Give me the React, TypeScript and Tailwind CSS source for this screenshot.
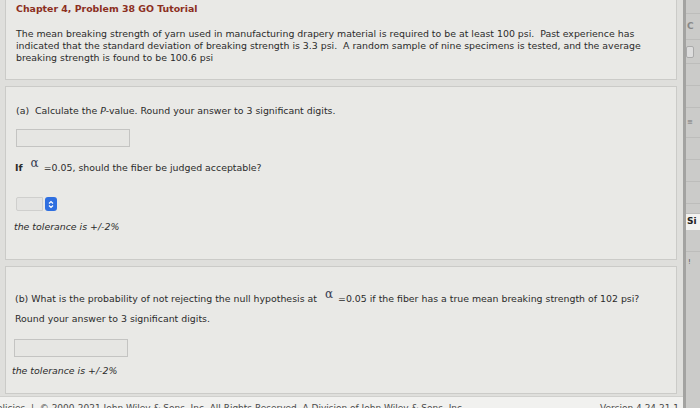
import React from 'react';

const body = "font-['DejaVu_Sans',Verdana,sans-serif] text-[9.4px] leading-[12px] text-[#2b2b2b] whitespace-nowrap";

function Alpha() {
  return (
    <span className="relative -top-[4px] ml-[8px] mr-[5px] font-['DejaVu_Serif',serif] text-[12px] text-[#3a3f55]">α</span>
  );
}

function TextInput({ className = '' }: { className?: string }) {
  return <div className={`h-[18px] w-[114px] border border-[#c4c4c2] bg-[#e6e6e3] ${className}`} />;
}

function Tolerance() {
  return <p className={`${body} italic`}>the tolerance is +/-2%</p>;
}

export default function App() {
  return (
    <div className="flex h-[408px] w-[700px] overflow-hidden bg-[#dfdfdc]">
      {/* main column */}
      <div className="flex w-[683px] flex-col">
        <div className="flex flex-col gap-[6px] pl-[5px] pr-[6px]">
          {/* intro */}
          <section className={`h-[80px] border-x border-b border-[#cbcbc8] bg-[#e9e9e6] px-[10px] pt-[3px] ${body}`}>
            <h1 className="font-bold text-[#8c2f1e]">Chapter 4, Problem 38 GO Tutorial</h1>
            <p className="mt-[13px]">
              The mean breaking strength of yarn used in manufacturing drapery material is required to be at least 100 psi.&nbsp; Past experience has
              <br />
              indicated that the standard deviation of breaking strength is 3.3 psi.&nbsp; A random sample of nine specimens is tested, and the average
              <br />
              breaking strength is found to be 100.6 psi
            </p>
          </section>

          {/* part a */}
          <section className="h-[174px] border border-[#cbcbc8] bg-[#e9e9e6] px-[10px] pt-[18px]">
            <p className={body}>
              (a)&nbsp; Calculate the <span className="italic">P</span>-value. Round your answer to 3 significant digits.
            </p>
            <TextInput className="mt-[12px]" />
            <p className={`${body} mt-[14px] -ml-[1px]`}>
              <span className="font-bold">If</span>
              <Alpha />=0.05, should the fiber be judged acceptable?
            </p>
            <div className="mt-[23px] flex items-center">
              <div className="h-[14px] w-[27px] rounded-l-[2px] border border-[#cfcfcd] bg-[#e4e4e2]" />
              <div className="ml-[2px] flex h-[14px] w-[12px] items-center justify-center rounded-[3px] bg-[#2f6fe0]">
                <svg width="6" height="9" viewBox="0 0 6 9" fill="none" stroke="white" strokeWidth="1.2">
                  <path d="M1 3.5 L3 1.5 L5 3.5" />
                  <path d="M1 5.5 L3 7.5 L5 5.5" />
                </svg>
              </div>
            </div>
            <div className="mt-[10px] -ml-[2px]">
              <Tolerance />
            </div>
          </section>

          {/* part b */}
          <section className="h-[128px] border border-[#cbcbc8] bg-[#e9e9e6] px-[9px] pt-[25px]">
            <p className={body}>
              (b) What is the probability of not rejecting the null hypothesis at
              <Alpha />=0.05 if the fiber has a true mean breaking strength of 102 psi?
            </p>
            <p className={`${body} mt-[8px]`}>Round your answer to 3 significant digits.</p>
            <TextInput className="mt-[14px] -ml-[1px]" />
            <div className="mt-[8px] -ml-[3px]">
              <Tolerance />
            </div>
          </section>
        </div>

        {/* footer */}
        <footer className="mt-[2px] flex flex-1 items-start justify-between border-t border-[#d0d0cd] bg-[#f1f1ef] pr-[4px] pt-[5px] font-['DejaVu_Sans',Verdana,sans-serif] text-[9px] leading-[12px] text-[#4a4a4a] whitespace-nowrap">
          <span className="-ml-[8px]">Policies&nbsp; |&nbsp; © 2000-2021 John Wiley &amp; Sons, Inc. All Rights Reserved. A Division of John Wiley &amp; Sons, Inc.</span>
          <span>Version 4.24.21.1</span>
        </footer>
      </div>

      {/* right edge strip */}
      <div className="flex w-[17px] border-l-[3px] border-[#a3a3a1] bg-[#cbcbc9]">
        <div className="flex w-full flex-col font-['DejaVu_Sans',sans-serif] text-[8px] text-[#555]">
          <div className="h-[14px] border-b border-[#bdbdbb]" />
          <div className="flex h-[26px] items-center border-b border-[#bdbdbb] pl-[1px] text-[9px] font-bold text-[#888]">C</div>
          <div className="flex h-[24px] items-center border-b border-[#bdbdbb]">
            <div className="h-[12px] w-[8px] rounded-[2px] border border-[#aaa] bg-[#ddd]" />
          </div>
          <div className="h-[22px] border-b border-[#bdbdbb]" />
          <div className="h-[22px] border-b border-[#bdbdbb]" />
          <div className="flex h-[30px] items-center border-b border-[#bdbdbb] pl-[1px] text-[7px] text-[#777]">≡</div>
          <div className="h-[22px] border-b border-[#bdbdbb]" />
          <div className="h-[22px] border-b border-[#bdbdbb]" />
          <div className="h-[22px] border-b border-[#bdbdbb]" />
          <div className="h-[10px] border-b border-[#bdbdbb]" />
          <div className="flex h-[16px] items-center bg-[#f2f2f0] pl-[1px] text-[9px] font-bold text-[#222]">Si</div>
          <div className="h-[22px] border-b border-[#bdbdbb]" />
          <div className="flex h-[20px] items-center pl-[2px] text-[7px]">!</div>
          <div className="flex-1" />
        </div>
      </div>
    </div>
  );
}
